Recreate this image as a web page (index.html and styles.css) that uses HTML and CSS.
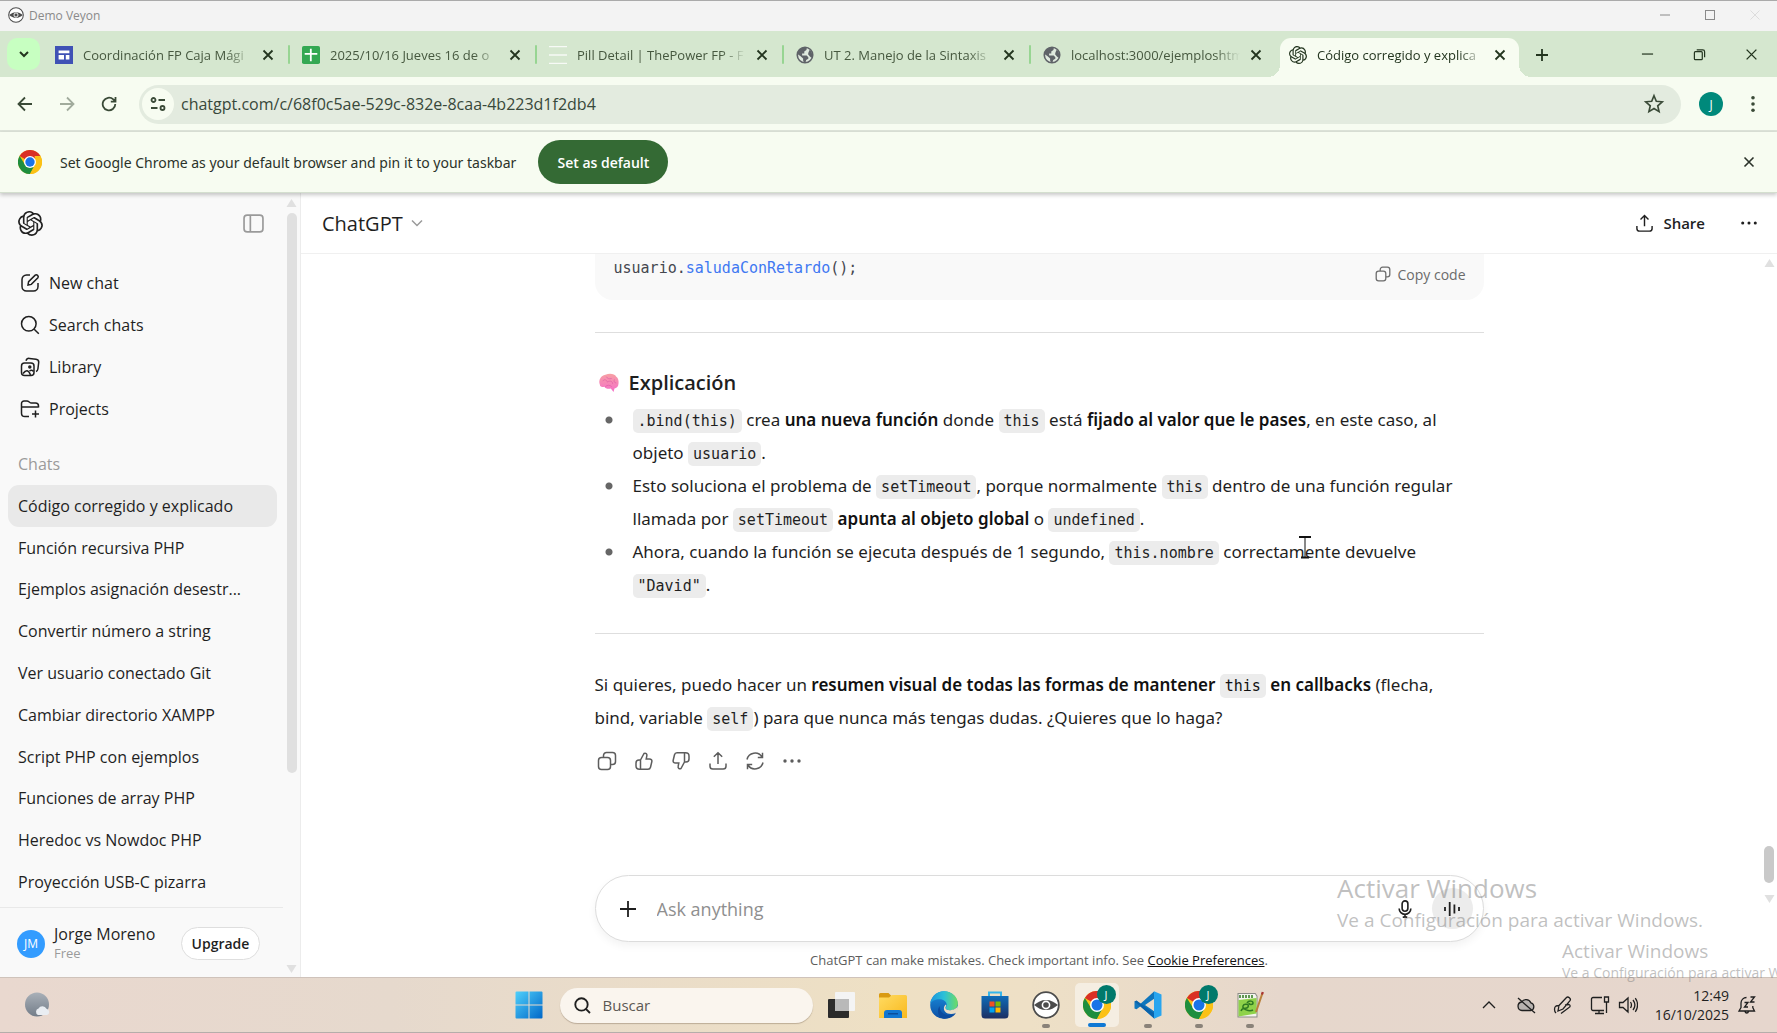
FILE: index.html
```html
<!DOCTYPE html>
<html lang="es">
<head>
<meta charset="utf-8">
<title>Demo Veyon</title>
<link rel="stylesheet" href="styles.css">
</head>
<body>
<svg class="defs" aria-hidden="true">
  <defs>
    <linearGradient id="g-win" x1="0" y1="0" x2="1" y2="1"><stop offset="0" stop-color="#4fd0fb"/><stop offset="1" stop-color="#0067c8"/></linearGradient>
    <linearGradient id="g-edge" x1="0" y1="0" x2="1" y2="0"><stop offset="0" stop-color="#1a94dc"/><stop offset=".5" stop-color="#2cc0d8"/><stop offset="1" stop-color="#6fdc62"/></linearGradient>
    <linearGradient id="g-edge2" x1="0" y1="0" x2="0" y2="1"><stop offset="0" stop-color="#1b8fdd"/><stop offset="1" stop-color="#0c4fa5"/></linearGradient>
    <linearGradient id="g-store" x1="0" y1="0" x2="0" y2="1"><stop offset="0" stop-color="#0f6cb8"/><stop offset="1" stop-color="#1c2f63"/></linearGradient>
    <linearGradient id="g-folder" x1="0" y1="0" x2="1" y2="1"><stop offset="0" stop-color="#ffdb62"/><stop offset="1" stop-color="#f9b91e"/></linearGradient>
    <linearGradient id="g-brain" x1="0" y1="0" x2="0" y2="1"><stop offset="0" stop-color="#f7a0a4"/><stop offset="1" stop-color="#f56fc9"/></linearGradient>
    <linearGradient id="g-moon" x1="0" y1="0" x2="0" y2="1"><stop offset="0" stop-color="#a9b0b8"/><stop offset="1" stop-color="#737d89"/></linearGradient>
  </defs>
  <symbol id="i-openai" viewBox="0 0 24 24"><path fill="currentColor" d="M22.2819 9.8211a5.9847 5.9847 0 0 0-.5157-4.9108 6.0462 6.0462 0 0 0-6.5098-2.9A6.0651 6.0651 0 0 0 4.9807 4.1818a5.9847 5.9847 0 0 0-3.9977 2.9 6.0462 6.0462 0 0 0 .7427 7.0966 5.98 5.98 0 0 0 .511 4.9107 6.051 6.051 0 0 0 6.5146 2.9001A5.9847 5.9847 0 0 0 13.2599 24a6.0557 6.0557 0 0 0 5.7718-4.2058 5.9894 5.9894 0 0 0 3.9977-2.9001 6.0557 6.0557 0 0 0-.7475-7.0729zm-9.022 12.6081a4.4755 4.4755 0 0 1-2.8764-1.0408l.1419-.0804 4.7783-2.7582a.7948.7948 0 0 0 .3927-.6813v-6.7369l2.02 1.1686a.071.071 0 0 1 .038.052v5.5826a4.504 4.504 0 0 1-4.4945 4.4944zm-9.6607-4.1254a4.4708 4.4708 0 0 1-.5346-3.0137l.142.0852 4.783 2.7582a.7712.7712 0 0 0 .7806 0l5.8428-3.3685v2.3324a.0804.0804 0 0 1-.0332.0615L9.74 19.9502a4.4992 4.4992 0 0 1-6.1408-1.6464zM2.3408 7.8956a4.485 4.485 0 0 1 2.3655-1.9728V11.6a.7664.7664 0 0 0 .3879.6765l5.8144 3.3543-2.0201 1.1685a.0757.0757 0 0 1-.071 0l-4.8303-2.7865A4.504 4.504 0 0 1 2.3408 7.872zm16.5963 3.8558L13.1038 8.364 15.1192 7.2a.0757.0757 0 0 1 .071 0l4.8303 2.7913a4.4944 4.4944 0 0 1-.6765 8.1042v-5.6772a.79.79 0 0 0-.407-.667zm2.0107-3.0231l-.142-.0852-4.7735-2.7818a.7759.7759 0 0 0-.7854 0L9.409 9.2297V6.8974a.0662.0662 0 0 1 .0284-.0615l4.8303-2.7866a4.4992 4.4992 0 0 1 6.6802 4.66zM8.3065 12.863l-2.02-1.1638a.0804.0804 0 0 1-.038-.0567V6.0742a4.4992 4.4992 0 0 1 7.3757-3.4537l-.142.0805L8.704 5.459a.7948.7948 0 0 0-.3927.6813zm1.0976-2.3654l2.602-1.4998 2.6069 1.4998v2.9994l-2.5974 1.4997-2.6067-1.4997Z"/></symbol>
  <symbol id="i-x" viewBox="0 0 12 12"><path d="M1.5 1.5l9 9M10.5 1.5l-9 9"/></symbol>
  <symbol id="i-globe" viewBox="0 0 20 20"><circle cx="10" cy="10" r="8.6" fill="#dfe9de" stroke="#5f6368" stroke-width="1.8"/><path fill="#5f6368" stroke="none" d="M2 7.5C3 4 6 1.500 10 1.500l2 .4-.4 2.600-2.400 1.700v2.200H6.800v2.100h5.100l1.800 1.900v1.800l-2.400 1.300-.8 3H9l-1.100-2.400v-2.200L4.800 11 2 9.300zM15.200 4.300l2 2.200 1 3.500-.8 3.200-2.200-1.700-1.800-2.300.5-2.300z"/></symbol>
  <symbol id="i-chrome" viewBox="0 0 24 24"><circle cx="12" cy="12" r="12" fill="#fbc116"/><path fill="#d93025" d="M12 12 1.600 6A12 12 0 0 1 22.400 6z"/><path fill="#1e8e3e" d="M1.600 6 7.200 14.900 12 12l4.800 2.800L12 24A12 12 0 0 1 1.600 6z"/><path fill="#fbc116" d="M12 24l5.200-9A6 6 0 0 0 17.200 9L16.500 6h5.900A12 12 0 0 1 12 24z"/><circle cx="12" cy="12" r="6" fill="#fff"/><circle cx="12" cy="12" r="4.700" fill="#1a73e8"/></symbol>
  <symbol id="i-veyon" viewBox="0 0 28 28"><circle cx="14" cy="14" r="12.800" fill="#fff" stroke="#4c4c4c" stroke-width="1.800"/><path fill="#4c4c4c" stroke="none" d="M2 14c4-3 7-5 12-5s8 2 12 5c-4 3-7 5-12 5s-8-2-12-5z"/><circle cx="14" cy="14" r="3.600" fill="#4c4c4c" stroke="#fff" stroke-width="1.600"/></symbol>
  <symbol id="i-copy" viewBox="0 0 20 20"><rect x="1.500" y="6.500" width="12" height="12" rx="3"/><path d="M6.500 6.300V4.500a3 3 0 0 1 3-3h6a3 3 0 0 1 3 3v6a3 3 0 0 1-3 3h-1.800"/></symbol>
  <symbol id="i-share" viewBox="0 0 20 20"><path d="M10 13V2M5.800 5.800 10 1.700l4.200 4.100M2 12.500v2.700a2.800 2.800 0 0 0 2.800 2.800h10.400a2.800 2.800 0 0 0 2.800-2.800v-2.700"/></symbol>
  <symbol id="i-up" viewBox="0 0 20 20"><path d="M6.500 9 10 2.500c1.700-.8 3.300.3 2.800 2.300L12.200 8h3.300c1.700 0 2.700 1.200 2.300 2.800l-1.300 5.400c-.3 1.200-1.300 2-2.500 2H5.500c-2 0-3.500-1.200-3.500-3.200v-3c0-1.800 1-3 3-3zM6.500 9v9"/></symbol>
  <symbol id="i-dots" viewBox="0 0 20 20"><g fill="currentColor" stroke="none"><circle cx="3" cy="10" r="1.700"/><circle cx="10" cy="10" r="1.700"/><circle cx="17" cy="10" r="1.700"/></g></symbol>
  <symbol id="i-search" viewBox="0 0 20 20"><circle cx="8.800" cy="8.800" r="7.300"/><path d="m14.200 14.200 4.600 4.600"/></symbol>
</svg>

<header class="titlebar">
  <svg class="titlebar-icon"><use href="#i-veyon"/></svg>
  <span class="titlebar-name">Demo Veyon</span>
  <div class="winctl winctl-outer">
    <button aria-label="Minimizar"><svg viewBox="0 0 12 12"><path d="M1 6h10"/></svg></button>
    <button aria-label="Maximizar"><svg viewBox="0 0 12 12"><rect x="1.500" y="1.500" width="9" height="9"/></svg></button>
    <button class="faint" aria-label="Cerrar"><svg><use href="#i-x"/></svg></button>
  </div>
</header>

<div class="tabstrip">
  <button class="tab-search" aria-label="Search tabs"><svg viewBox="0 0 12 12"><path d="M2 4l4 4 4-4"/></svg></button>
  <div class="tabs">
    <div class="tab"><svg class="favicon" viewBox="0 0 20 20"><rect width="20" height="20" fill="#3f51b5"/><path fill="#fff" d="M4 5h12v3H4zM4 10h6v5H4zM12 10h4v5h-4z"/></svg><a href="#">Coordinación FP Caja Mági</a><button aria-label="Close tab"><svg><use href="#i-x"/></svg></button></div>
    <div class="tab"><svg class="favicon" viewBox="0 0 20 20"><rect width="20" height="20" rx="2" fill="#34a853"/><path fill="#fff" d="M8.800 3h2v4.800H17v2h-6.200V17h-2V9.800H3v-2h5.800z"/></svg><a href="#">2025/10/16 Jueves 16 de o</a><button aria-label="Close tab"><svg><use href="#i-x"/></svg></button></div>
    <div class="tab"><svg class="favicon" viewBox="0 0 20 20"><path fill="#fff" opacity=".8" d="M0 0h20v1.500H0zM0 9.200h20v1.600H0zM0 18.500h20V20H0z"/></svg><a href="#">Pill Detail | ThePower FP - F</a><button aria-label="Close tab"><svg><use href="#i-x"/></svg></button></div>
    <div class="tab"><svg class="favicon"><use href="#i-globe"/></svg><a href="#">UT 2. Manejo de la Sintaxis</a><button aria-label="Close tab"><svg><use href="#i-x"/></svg></button></div>
    <div class="tab"><svg class="favicon"><use href="#i-globe"/></svg><a href="#">localhost:3000/ejemploshtm</a><button aria-label="Close tab"><svg><use href="#i-x"/></svg></button></div>
    <div class="tab active"><svg class="favicon"><use href="#i-openai"/></svg><a href="#">Código corregido y explica</a><button aria-label="Close tab"><svg><use href="#i-x"/></svg></button></div>
    <button class="tab-new" aria-label="New tab"><svg viewBox="0 0 14 14"><path d="M7 1v12M1 7h12"/></svg></button>
  </div>
  <div class="winctl">
    <button aria-label="Minimize"><svg viewBox="0 0 14 14"><path d="M1 6.500h12"/></svg></button>
    <button aria-label="Restore"><svg viewBox="0 0 14 14"><rect x="1.500" y="4" width="8.500" height="8.500" rx="1"/><path d="M4 2h6.500a2 2 0 0 1 2 2v6"/></svg></button>
    <button aria-label="Close"><svg><use href="#i-x"/></svg></button>
  </div>
</div>

<div class="toolbar">
  <button aria-label="Back"><svg viewBox="0 0 16 16"><path d="M15 8H2M8 1.500 1.500 8 8 14.500"/></svg></button>
  <button class="off" aria-label="Forward"><svg viewBox="0 0 16 16"><path d="M1 8h13M8 1.500 14.500 8 8 14.500"/></svg></button>
  <button aria-label="Reload"><svg viewBox="0 0 16 16"><path d="M14.300 8A6.300 6.300 0 1 1 12.300 3.400L14.500 5.500M14.500 1v4.700H9.800"/></svg></button>
  <div class="omnibox">
    <button class="siteinfo" aria-label="Site information"><svg viewBox="0 0 16 16"><circle cx="3.500" cy="4" r="2"/><path d="M8.500 4H15M1 12h6.500"/><circle cx="12.500" cy="12" r="2"/></svg></button>
    <input type="text" aria-label="Address" value="chatgpt.com/c/68f0c5ae-529c-832e-8caa-4b223d1f2db4">
    <button class="star" aria-label="Bookmark"><svg viewBox="0 0 20 20"><path d="m10 2.500 2.100 5 5.400.5-4.100 3.600 1.200 5.300L10 14.100l-4.600 2.800 1.200-5.300L2.500 8l5.400-.5z"/></svg></button>
  </div>
  <button class="profile" aria-label="Profile">J</button>
  <button aria-label="Menu"><svg viewBox="0 0 16 16"><g fill="currentColor" stroke="none"><circle cx="8" cy="1.800" r="1.800"/><circle cx="8" cy="8" r="1.800"/><circle cx="8" cy="14.200" r="1.800"/></g></svg></button>
</div>

<div class="infobar">
  <svg class="infobar-logo"><use href="#i-chrome"/></svg>
  <span>Set Google Chrome as your default browser and pin it to your taskbar</span>
  <button class="set-default">Set as default</button>
  <button class="dismiss" aria-label="Dismiss"><svg><use href="#i-x"/></svg></button>
</div>

<div class="app">
  <aside class="sidebar">
    <div class="sidebar-inner">
      <div class="sidebar-top">
        <a href="#" aria-label="Home"><svg class="logo"><use href="#i-openai"/></svg></a>
        <button aria-label="Close sidebar"><svg class="toggle" viewBox="0 0 20 18"><rect x="1" y="1" width="18" height="16" rx="3"/><path d="M7 1v16"/></svg></button>
      </div>
      <nav class="nav">
        <a href="#"><svg viewBox="0 0 20 20"><path d="M10 2H6.500A4.500 4.500 0 0 0 2 6.500v7A4.500 4.500 0 0 0 6.500 18h7a4.500 4.500 0 0 0 4.500-4.500V10M8 12l.6-3.300 6.600-6.600c1.600-1.200 3.900 1 2.700 2.700l-6.600 6.600z"/></svg>New chat</a>
        <a href="#"><svg><use href="#i-search"/></svg>Search chats</a>
        <a href="#"><svg viewBox="0 0 20 20"><rect x="1.500" y="6" width="12.500" height="12.500" rx="3"/><path d="M6 3.800C6.500 2 7.800 1.200 9.500 1.400l6.500.8c1.800.2 2.900 1.500 2.700 3.300l-.8 6.500c-.2 1.300-.9 2.100-1.900 2.500M3 16.500c3-4 5.500-4 7.500 1.500M9.500 14c1.500-1.200 3-1 4 .5"/><circle cx="9.800" cy="10" r="1" fill="currentColor"/></svg>Library</a>
        <a href="#"><svg viewBox="0 0 20 20"><path d="M9 17.500H4.800A3.300 3.300 0 0 1 1.500 14.200V4.500a2.500 2.500 0 0 1 2.500-2.500h3c2 0 2.500 2 4.500 2h4a3 3 0 0 1 3 3v1.500M1.500 8h17M15.500 11.500v7M12 15h7"/></svg>Projects</a>
      </nav>
      <h2 class="chats-label">Chats</h2>
      <div class="chats">
        <a class="current" href="#">Código corregido y explicado</a>
        <a href="#">Función recursiva PHP</a>
        <a href="#">Ejemplos asignación desestr...</a>
        <a href="#">Convertir número a string</a>
        <a href="#">Ver usuario conectado Git</a>
        <a href="#">Cambiar directorio XAMPP</a>
        <a href="#">Script PHP con ejemplos</a>
        <a href="#">Funciones de array PHP</a>
        <a href="#">Heredoc vs Nowdoc PHP</a>
        <a href="#">Proyección USB-C pizarra</a>
      </div>
      <div class="account">
        <span class="account-avatar">JM</span>
        <div class="account-text"><span class="account-name">Jorge Moreno</span><span class="account-plan">Free</span></div>
        <button class="upgrade">Upgrade</button>
      </div>
    </div>
    <div class="scroll" aria-hidden="true"><svg viewBox="0 0 10 8"><path d="M5 0l5 8H0z"/></svg><div class="track"><div class="thumb thumb-side"></div></div><svg viewBox="0 0 10 8"><path d="M5 8l5-8H0z"/></svg></div>
  </aside>

  <main class="main">
    <div class="main-head">
      <button class="model">ChatGPT<svg viewBox="0 0 12 8"><path d="M1 1.500l5 5 5-5"/></svg></button>
      <button class="share"><svg><use href="#i-share"/></svg>Share</button>
      <button class="more" aria-label="More"><svg><use href="#i-dots"/></svg></button>
    </div>
    <div class="thread">
      <div class="column">
        <div class="codeblock">
          <pre>usuario.<span>saludaConRetardo</span>();</pre>
          <button class="copy"><svg><use href="#i-copy"/></svg>Copy code</button>
        </div>
        <hr>
        <h3><svg viewBox="0 0 24 22"><path fill="url(#g-brain)" d="M2 13C0 8 3 3 8 2c5-2 10-1 12 2 3 2 3 7 2 10-1 2-3 3-4 3l-1 4-3-4c-3 1-6 0-7-2-3 1-5 0-5-2z"/><path fill="none" stroke="#e061a8" stroke-width=".8" d="M5 9c2-3 5-1 5 1 3-2 6-1 6 2M9 4c1 2 3 3 6 2M18 7c-1 2 0 4 2 4M8 15c2-2 5-2 7 0"/></svg>Explicación</h3>
        <ul>
          <li><code>.bind(this)</code> crea <strong>una nueva función</strong> donde <code>this</code> está <strong>fijado al valor que le pases</strong>, en este caso, al objeto <code>usuario</code>.</li>
          <li>Esto soluciona el problema de <code>setTimeout</code>, porque normalmente <code>this</code> dentro de una función regular llamada por <code>setTimeout</code> <strong>apunta al objeto global</strong> o <code>undefined</code>.</li>
          <li>Ahora, cuando la función se ejecuta después de 1 segundo, <code>this.nombre</code> correctamente devuelve <code>"David"</code>.</li>
        </ul>
        <hr>
        <p>Si quieres, puedo hacer un <strong>resumen visual de todas las formas de mantener <code>this</code> en callbacks</strong> (flecha, bind, variable <code>self</code>) para que nunca más tengas dudas. ¿Quieres que lo haga?</p>
        <div class="actions">
          <button aria-label="Copy"><svg><use href="#i-copy"/></svg></button>
          <button aria-label="Good response"><svg><use href="#i-up"/></svg></button>
          <button aria-label="Bad response"><svg class="flip"><use href="#i-up"/></svg></button>
          <button aria-label="Share"><svg><use href="#i-share"/></svg></button>
          <button aria-label="Try again"><svg viewBox="0 0 20 20"><path d="M2 8.500A8.200 8.200 0 0 1 17 6M17.500 1.800V6.500h-4.700M18 11.500A8.200 8.200 0 0 1 3 14M2.500 18.200V13.500h4.700"/></svg></button>
          <button aria-label="More actions"><svg><use href="#i-dots"/></svg></button>
        </div>
      </div>
      <svg class="ibeam" viewBox="0 0 14 24" aria-hidden="true"><path d="M1 1.500h12M3 22h8"/><path class="thin" d="M7 2v20"/></svg>
    </div>
    <div class="composer-area">
      <form class="composer">
        <button type="button" aria-label="Add"><svg viewBox="0 0 18 18"><path d="M9 1v16M1 9h16"/></svg></button>
        <input type="text" aria-label="Message" placeholder="Ask anything">
        <button type="button" aria-label="Dictate"><svg viewBox="0 0 18 20"><rect x="5.800" y="1" width="6.400" height="11.500" rx="3.200"/><path d="M2.500 9.500a6.500 6.500 0 0 0 13 0M9 16v3M6.500 19h5"/></svg></button>
        <button type="button" class="voice" aria-label="Voice mode"><svg viewBox="0 0 18 18"><path d="M2 7v4M6.700 2v14M11.400 4.500v9M16 7v4"/></svg></button>
      </form>
      <p class="disclaimer">ChatGPT can make mistakes. Check important info. See <a href="#">Cookie Preferences</a>.</p>
    </div>
    <div class="scroll scroll-main" aria-hidden="true"><svg viewBox="0 0 10 8"><path d="M5 0l5 8H0z"/></svg><div class="track track-end"><div class="thumb thumb-main"></div></div><svg viewBox="0 0 10 8"><path d="M5 8l5-8H0z"/></svg></div>
  </main>
</div>

<footer class="taskbar">
  <div class="task-left"><button aria-label="Widgets"><svg viewBox="0 0 28 28"><circle cx="13" cy="13.500" r="12" fill="url(#g-moon)"/><path fill="#e9edf2" d="M14 24a3.500 3.500 0 0 1 .5-6.500 4.500 4.500 0 0 1 8 .3A3.200 3.200 0 0 1 23 24z"/></svg></button></div>
  <div class="task-center">
    <button class="task" aria-label="Inicio"><svg viewBox="0 0 28 28"><path fill="url(#g-win)" d="M.5 1.500a1 1 0 0 1 1-1h12v13H.5zM14.500.5h12a1 1 0 0 1 1 1v12h-13zM.5 14.500h13v13h-12a1 1 0 0 1-1-1zM14.500 14.500h13v12a1 1 0 0 1-1 1h-12z"/></svg></button>
    <label class="task-search"><svg><use href="#i-search"/></svg><input type="text" placeholder="Buscar" aria-label="Buscar"></label>
    <button class="task" aria-label="Vista de tareas"><svg viewBox="0 0 28 28"><rect x="0" y="8" width="21" height="19" rx="1" fill="#2b2b2b"/><rect x="7" y="1" width="20" height="19" rx="1" fill="#f4f4f4"/><path fill="#b9b9b9" d="M7 8h14v12H7z"/></svg></button>
    <button class="task" aria-label="Explorador"><svg viewBox="0 0 28 28"><path fill="#d99a12" d="M0 3.500a1.500 1.500 0 0 1 1.500-1.500h8l3 3H20v6H0z"/><path fill="url(#g-folder)" d="M0 6.500h10l3-2.500h13.500a1.500 1.500 0 0 1 1.500 1.500V27H0z"/><path fill="#1277d2" d="M5 27v-5a3 3 0 0 1 3-3h12a3 3 0 0 1 3 3v5z"/><path fill="#0a4e9c" d="M9 22h10v1.500H9z"/></svg></button>
    <button class="task" aria-label="Edge"><svg viewBox="0 0 28 28"><circle cx="14" cy="14" r="13.800" fill="url(#g-edge2)"/><path fill="url(#g-edge)" d="M.3 13C1 5.500 7 .2 14 .2c8 0 13.800 6 13.800 12 0 4.500-3.500 7-7.500 7-3 0-4.800-1-4.800-2.200 0-.8 1.200-1.300 1.200-3.200 0-3-3-5.500-7-5.500C5 8.300 1.500 10 .3 13z"/><path fill="#0b4a9e" d="M9.700 15c-.5 5 4 9.500 9.500 9.300 2.500 0 4.500-.8 6.800-2.300-2 3.500-7 6-11.500 5.800-6-.5-8.500-8-4.800-12.800z"/><path fill="#eaddc5" d="M16 13.500c1 1.500-1 2.500-.5 3.800.5 1.500 3 2.300 6 1.700 3.500-.6 5-2 6.200-4l.3 5-2.500 2c-3 1.500-8 1.500-10.500-1.500-2-2.500-1-6 1-7z"/></svg></button>
    <button class="task" aria-label="Microsoft Store"><svg viewBox="0 0 28 28"><path class="lined" fill="none" stroke="#35b5ea" stroke-width="2" d="M8 6V1.500h12V6"/><path fill="url(#g-store)" d="M.5 5h27v19a3.500 3.500 0 0 1-3.500 3.500H4A3.500 3.500 0 0 1 .5 24z"/><path fill="#f25022" d="M8.500 10.500h5v5h-5z"/><path fill="#7fba00" d="M14.500 10.500h5v5h-5z"/><path fill="#00a4ef" d="M8.500 16.500h5v5h-5z"/><path fill="#ffb900" d="M14.500 16.500h5v5h-5z"/></svg></button>
    <button class="task running" aria-label="Veyon"><svg><use href="#i-veyon"/></svg></button>
    <button class="task running focused" aria-label="Chrome"><svg><use href="#i-chrome"/></svg><span class="badge">J</span></button>
    <button class="task running" aria-label="VS Code"><svg viewBox="0 0 28 28"><path fill="#0f76bd" d="M20 .5 6.500 12.700 2.500 9.700.500 10.500v7l2 .8 4-3L20 27.500l.5-7-9.500-6.500L20.500 7.500z"/><path fill="#0a63ab" d="m.5 10.500 2-1 18 13V27.500z"/><path fill="#28a5ef" d="M20 .3 27.500 3.500v21L20 27.700z"/></svg></button>
    <button class="task running" aria-label="Chrome"><svg><use href="#i-chrome"/></svg><span class="badge">J</span></button>
    <button class="task running" aria-label="Notepad++"><svg viewBox="0 0 28 28"><path fill="#8b8b86" d="M1.500 2h18l2 3v21.500h-20z"/><path fill="#f4f4ee" d="M2.500 3h16.500l1.500 2.500v20h-18z"/><path fill="#8fd24a" d="M2.500 9 20.500 7v15.500l-18 3z"/><path fill="none" stroke="#2f7a22" stroke-width="1.500" d="M5 20c2-5 5-1 7-4s-4-4-5-1 6 6 10 4M11 12c2-3 6-2 6 0s-4 2-4 0M4 4v3M7 4v3M10 4v3M13 4v3M16 4v3"/><path stroke="#b9803a" stroke-width="2" d="M26.500 2 20 21"/><path stroke="#a33" stroke-width="2.200" d="m26.800 1-.8 2.500"/></svg></button>
  </div>
  <div class="tray">
    <button aria-label="Iconos ocultos"><svg viewBox="0 0 20 20"><path d="M4 13l6-6 6 6"/></svg></button>
    <button aria-label="OneDrive"><svg viewBox="0 0 20 20"><path class="lined" fill="#b8b3b0" d="M6 15.500a4.300 4.300 0 0 1-.5-8.500 5.300 5.300 0 0 1 9.300.8A4 4 0 0 1 15 15.500z"/><path d="M2 3l17 15"/></svg></button>
    <button aria-label="Lápiz"><svg viewBox="0 0 20 20"><path d="M6 10.500 13.500 2.500c1.500-1.500 5 1 3.500 3.200L10 14l-5 2 1-5.500zM6.500 10.500 3 11c-2 1-2 5 0 7M12 10l4-.5c1.500.5 1.500 2.500 0 3L8 18.500"/></svg></button>
    <button class="pair" aria-label="Red y volumen"><svg viewBox="0 0 20 20"><path d="M12 2.500H3A1.500 1.500 0 0 0 1.500 4v10A1.500 1.500 0 0 0 3 15.500h11M5 18.500h9M9 15.500v3M14.500 2h4v5h-4zM16.500 7v11"/></svg><svg viewBox="0 0 20 20"><path d="M1.500 7.500h3.500l5-4.500v14l-5-4.500H1.500zM12.500 7c1.300 2 1.300 4 0 6M15 5c2.300 3 2.300 7 0 10M17.300 3.200c3 4 3 9.600 0 13.600"/></svg></button>
    <button class="clock"><span>12:49</span><span>16/10/2025</span></button>
    <button aria-label="Notificaciones"><svg viewBox="0 0 20 20"><path d="M9.500 2.500A5.500 5.500 0 0 0 4 8v4.500l-2 3.500h15.500l-1.700-3.500V11M8 16.500c.5 2 3 2 3.500 0M7.500 7.500h3.500l-3.500 4.500h3.500M13.500 2h4l-4 5h4"/></svg></button>
  </div>
</footer>

<div class="watermark" aria-hidden="true"><span>Activar Windows</span><small>Ve a Configuración para activar Windows.</small></div>
<div class="watermark watermark-small" aria-hidden="true"><span>Activar Windows</span><small>Ve a Configuración para activar Windows.</small></div>
</body>
</html>
```
FILE: styles.css
```css
* { box-sizing: border-box; }

body {
  margin: 0;
  height: 100vh;
  display: flex;
  flex-direction: column;
  position: relative;
  overflow: hidden;
  font-family: "Open Sans", "Noto Sans", sans-serif;
  font-size: 16px;
  color: #1f1f1f;
  background: #fff;
}

.defs { position: absolute; width: 0; height: 0; }

svg { flex: none; display: block; fill: none; stroke: currentColor; stroke-width: 1.6; }
svg path[fill^="url"], svg path[fill^="#"]:not(.lined), svg rect[fill^="#"] { stroke: none; }
.titlebar svg, .favicon, .infobar-logo, .logo, .task svg, .task-left svg { stroke: none; }

button {
  margin: 0;
  padding: 0;
  border: 0;
  background: none;
  font: inherit;
  color: inherit;
  display: flex;
  align-items: center;
  justify-content: center;
}
a { color: inherit; text-decoration: none; }
input { font: inherit; color: inherit; border: 0; padding: 0; background: none; min-width: 0; outline: 0; }

/* outer window */
.titlebar {
  flex: none;
  height: 31px;
  display: flex;
  align-items: center;
  gap: 5px;
  padding: 0 0 2px 8px;
  background: #f3f3f3;
  border-top: 1px solid #aaa;
  color: #8a8a8a;
  font-size: 12px;
}
.titlebar-icon { width: 16px; height: 16px; }
.winctl { margin-left: auto; display: flex; }
.winctl button { width: 52px; height: 32px; }
.winctl svg { width: 13px; height: 13px; stroke: currentColor; stroke-width: 1.3; }
.winctl-outer button { width: 45px; height: 28px; }
.winctl-outer svg { width: 12px; height: 12px; stroke-width: 1; }
.faint { color: #dcdcdc; }

/* tabs */
.tabstrip {
  flex: none;
  height: 46px;
  display: flex;
  align-items: center;
  padding-left: 7px;
  background: #d5e7cf;
  color: #23351f;
}
.tab-search { width: 33px; height: 32px; border-radius: 10px; background: #c7ffc1; }
.tab-search svg { width: 12px; height: 12px; stroke-width: 2; }
.tabs { flex: 1; min-width: 0; display: flex; align-items: flex-end; align-self: stretch; padding-left: 2px; }
.tab {
  flex: 0 1 247px;
  min-width: 0;
  height: 39px;
  display: flex;
  align-items: center;
  padding: 0 15px 6px 13px;
  font-size: 13px;
  position: relative;
  color: #46583f;
}
.tab:not(.active)::after {
  content: "";
  position: absolute;
  right: -1px;
  top: 7px;
  width: 2px;
  height: 19px;
  border-radius: 1px;
  background: #97d592;
}
.tab:nth-child(5)::after { display: none; }
.favicon { width: 18px; height: 18px; }
.tab a {
  flex: 1;
  margin-left: 10px;
  overflow: hidden;
  white-space: nowrap;
  mask-image: linear-gradient(90deg, #000 85%, transparent);
}
.tab button { width: 12px; margin-left: 10px; color: #23351f; }
.tab button svg { width: 12px; height: 12px; stroke-width: 1.8; }
.tab.active { flex-basis: 239px; margin: 0 4px 0 3px; padding: 0 13px 6px 9px; background: #f7fcf1; border-radius: 11px 11px 0 0; color: #23351f; }
.tab.active::before, .tab.active::after {
  content: "";
  position: absolute;
  bottom: 0;
  width: 12px;
  height: 12px;
}
.tab.active::before { left: -12px; background: radial-gradient(circle at 0 0, transparent 12px, #f7fcf1 12px); }
.tab.active::after { right: -12px; background: radial-gradient(circle at 100% 0, transparent 12px, #f7fcf1 12px); }
.tab-new { width: 38px; height: 39px; padding-bottom: 6px; }
.tab-new svg { width: 14px; height: 14px; stroke-width: 1.8; }

/* toolbar */
.toolbar {
  flex: none;
  height: 55px;
  display: flex;
  align-items: center;
  gap: 2px;
  padding: 1px 4px 0 5px;
  background: #f7fcf1;
  border-bottom: 2px solid #dde3d9;
  color: #3a4a37;
}
.toolbar > button { width: 40px; height: 40px; }
.toolbar > button svg { width: 16px; height: 16px; stroke-width: 1.8; }
.off { opacity: .45; }
.omnibox {
  flex: 1;
  display: flex;
  align-items: center;
  height: 39px;
  margin: 0 8px 0 8px;
  padding: 0 16px 0 3px;
  border-radius: 20px;
  background: #e3ebdf;
}
.siteinfo { width: 32px; height: 32px; border-radius: 50%; background: #f7fcf1; }
.siteinfo svg { width: 16px; height: 16px; stroke-width: 1.8; }
.omnibox input { flex: 1; margin-left: 7px; font-size: 16px; color: #38483a; }
.star svg { width: 22px; height: 22px; stroke-width: 1.5; }
.toolbar > .profile { width: 24px; height: 24px; margin: 0 8px; border-radius: 50%; background: #00897b; color: #fff; font-size: 12px; }

/* infobar */
.infobar {
  flex: none;
  height: 61px;
  display: flex;
  align-items: center;
  padding: 0 22px 0 18px;
  background: #f7fcf1;
  border-bottom: 1px solid #d4dfcf;
  box-shadow: 0 2px 4px rgba(0, 0, 0, .22);
  position: relative;
  z-index: 1;
  font-family: "Noto Sans", sans-serif;
  font-size: 14px;
  color: #2b332a;
}
.infobar-logo { width: 24px; height: 24px; margin-right: 18px; }
.set-default { width: 130px; height: 44px; margin-left: 22px; border-radius: 22px; background: #346a34; color: #fff; font-family: "Open Sans", sans-serif; font-weight: 600; }
.dismiss { margin-left: auto; }
.dismiss svg { width: 12px; height: 12px; }

/* app */
.app { flex: 1; min-height: 0; display: flex; }
.sidebar { flex: none; width: 301px; display: flex; background: #f9f9f9; border-right: 1px solid #ececec; }
.sidebar-inner { flex: 1; min-width: 0; display: flex; flex-direction: column; font-size: 16px; }
.sidebar-top { display: flex; align-items: center; justify-content: space-between; height: 60px; padding: 0 19px 0 18px; color: #222; }
.logo { width: 25px; height: 25px; }
.toggle { width: 21px; height: 19px; color: #9a9a9a; }
.nav { display: flex; flex-direction: column; padding: 9px 18px 0 20px; }
.nav a { display: flex; align-items: center; gap: 9px; height: 42px; }
.nav svg { width: 20px; height: 20px; stroke-width: 1.5; }
.chats-label { margin: 14px 0 0; padding-left: 18px; height: 41px; line-height: 40px; font-size: 16px; font-weight: 400; color: #9b9b9b; }
.chats { flex: 1; min-height: 0; display: grid; grid-auto-rows: 1fr; padding: 0 6px 4px 8px; }
.chats a { display: flex; align-items: center; padding-left: 10px; border-radius: 11px; white-space: nowrap; overflow: hidden; }
.chats .current { background: #e9e9e9; }
.account { display: flex; align-items: center; height: 70px; padding: 2px 23px 0 17px; border-top: 1px solid #e9e9e9; }
.account-avatar { width: 28px; height: 28px; border-radius: 50%; background: #339cff; color: #fff; font-size: 12px; display: flex; align-items: center; justify-content: center; }
.account-text { display: flex; flex-direction: column; margin-left: 9px; line-height: 19px; }
.account-plan { font-size: 13px; color: #9b9b9b; }
.upgrade { margin-left: auto; width: 79px; height: 33px; border: 1px solid #dedede; border-radius: 17px; background: #fff; font-size: 14px; font-weight: 600; }

.scroll { display: flex; flex-direction: column; align-items: center; width: 17px; padding: 6px 0 4px; }
.scroll svg { width: 11px; height: 8px; fill: #e0e0e0; stroke: none; }
.track { flex: 1; display: flex; flex-direction: column; padding: 6px 0; }
.track-end { justify-content: flex-end; padding-bottom: 12px; }
.thumb { width: 10px; border-radius: 5px; background: #e0e0e0; }
.thumb-side { height: 75%; }
.thumb-main { height: 37px; background: #c9c9c9; }

.main { flex: 1; min-width: 0; display: flex; flex-direction: column; position: relative; }
.main-head { flex: none; height: 61px; display: flex; align-items: center; padding: 0 19px 0 21px; border-bottom: 1px solid #f0f0f0; }
.model { gap: 8px; font-size: 20px; }
.model svg { width: 12px; height: 8px; color: #9a9a9a; stroke-width: 1.5; }
.share { margin-left: auto; gap: 9px; font-weight: 600; font-size: 15px; }
.share svg { width: 19px; height: 19px; stroke-width: 1.5; }
.more { margin-left: 35px; }
.more svg { width: 18px; height: 18px; }

.thread { flex: 1; min-height: 0; position: relative; overflow: hidden; padding: 0 16px; }
.scroll-main { position: absolute; right: 0; top: 60px; bottom: 74px; width: 16px; padding-bottom: 0; }
.column { max-width: 889px; margin: 0 auto; }
.codeblock {
  display: flex;
  justify-content: space-between;
  height: 46px;
  padding: 0 18px 0 19px;
  background: #f9f9f9;
  border-radius: 0 0 18px 18px;
}
pre, code { font-family: "DejaVu Sans Mono", "Liberation Mono", monospace; font-size: 15px; }
pre { margin: 0; line-height: 28px; color: #45474f; }
pre span { color: #4078f2; }
.copy { gap: 6px; height: 40px; font-size: 14px; color: #6b6b6b; }
.copy svg { width: 16px; height: 16px; }
hr { margin: 32px 0 0; border: 0; border-top: 1px solid #dedede; }
h3 { display: flex; align-items: center; gap: 9px; margin: 36px 0 6px 3px; font-size: 20px; line-height: 28px; font-weight: 600; }
h3 svg { width: 22px; height: 20px; }
ul { margin: 0; padding: 0; list-style: none; }
li, .column p { font-family: "Noto Sans", "Open Sans", sans-serif; font-size: 17px; line-height: 33px; }
li { padding-left: 38px; background: radial-gradient(circle at 14px 17px, #666 3px, transparent 4px); }
code { padding: 3px 5px; border-radius: 5px; background: #ececec; line-height: 18px; }
strong { font-weight: 600; color: #111; }
li code, strong code { font-weight: 400; }
.column p { margin: 34px 0 0; padding-right: 24px; }
.actions { display: flex; gap: 17px; margin-top: 17px; padding-left: 2px; color: #5d5d5d; }
.actions svg { width: 20px; height: 20px; stroke-width: 1.5; }
.flip { transform: rotate(180deg); }
.ibeam { position: absolute; left: 997px; top: 281px; width: 14px; height: 25px; color: #111; stroke-width: 2; }
.thin { stroke-width: 1; }

.composer-area { flex: none; padding: 0 16px 5px; }
.composer {
  max-width: 889px;
  height: 67px;
  margin: 0 auto;
  display: flex;
  align-items: center;
  padding: 0 10px 0 23px;
  border: 1px solid #dcdcdc;
  border-radius: 34px;
  background: #fff;
  box-shadow: 0 4px 8px rgba(0, 0, 0, .05);
}
.composer svg { width: 18px; height: 18px; stroke-width: 1.8; }
.composer input { flex: 1; margin-left: 20px; font-size: 18px; }
.composer input::placeholder { color: #8f8f8f; }
.voice { width: 41px; height: 41px; margin-left: 18px; border-radius: 50%; background: #ececec; }
.disclaimer { margin: 6px 0 0; text-align: center; font-size: 13px; line-height: 24px; color: #5d5d5d; }
.disclaimer a { color: #111; text-decoration: underline; }

/* taskbar */
.taskbar {
  flex: none;
  height: 56px;
  display: grid;
  grid-template-columns: 1fr auto 1fr;
  align-items: center;
  border-top: 1px solid #cfc3bb;
  border-bottom: 1px solid #b5adaa;
  background: linear-gradient(90deg, #e9d8cf, #e6d9cd 22%, #eee0c4 50%, #eee0c6 58%, #e6d7cc 72%, #e6d6cd);
}
.task-left { padding-left: 24px; }
.task-left svg { width: 28px; height: 28px; }
.task-center { display: flex; align-items: center; gap: 7px; padding-left: 1px; }
.task { width: 44px; height: 44px; border-radius: 5px; position: relative; }
.task svg { width: 28px; height: 28px; }
.running::after { content: ""; position: absolute; left: 18px; bottom: -1px; width: 8px; height: 4px; border-radius: 2px; background: #8a8279; }
.focused { background: #f5eee2; }
.focused::after { left: 13px; width: 18px; bottom: 0; background: #0f78d4; }
.badge { position: absolute; right: 3px; top: 2px; width: 19px; height: 19px; border-radius: 50%; background: #00796b; color: #fff; font-size: 11px; line-height: 19px; text-align: center; }
.task-search { width: 253px; height: 35px; margin-left: 2px; display: flex; align-items: center; gap: 12px; padding: 0 14px; border-radius: 18px; background: #faf5ee; box-shadow: 0 1px 1px rgba(120, 100, 80, .4); }
.task-search svg { width: 17px; height: 17px; stroke-width: 2.2; }
.task-search input { flex: 1; font-size: 15px; }
.task-search input::placeholder { color: #5c5853; }
.tray { display: flex; align-items: center; justify-content: flex-end; gap: 17px; padding-right: 20px; }
.tray svg { width: 20px; height: 20px; stroke-width: 1.3; }
.tray .pair { gap: 8px; }
.tray .clock { flex-direction: column; align-items: flex-end; font-size: 14px; line-height: 19px; }
.tray .clock + button { margin-left: -9px; }

.watermark { position: absolute; z-index: 2; left: 1337px; top: 871px; display: flex; flex-direction: column; color: rgba(130, 130, 130, .5); font-size: 26px; line-height: 34px; white-space: nowrap; pointer-events: none; }
.watermark small { font-size: 19px; line-height: 30px; }
.watermark-small { left: 1562px; top: 939px; font-size: 19px; line-height: 24px; }
.watermark-small small { font-size: 14px; line-height: 20px; }
```
